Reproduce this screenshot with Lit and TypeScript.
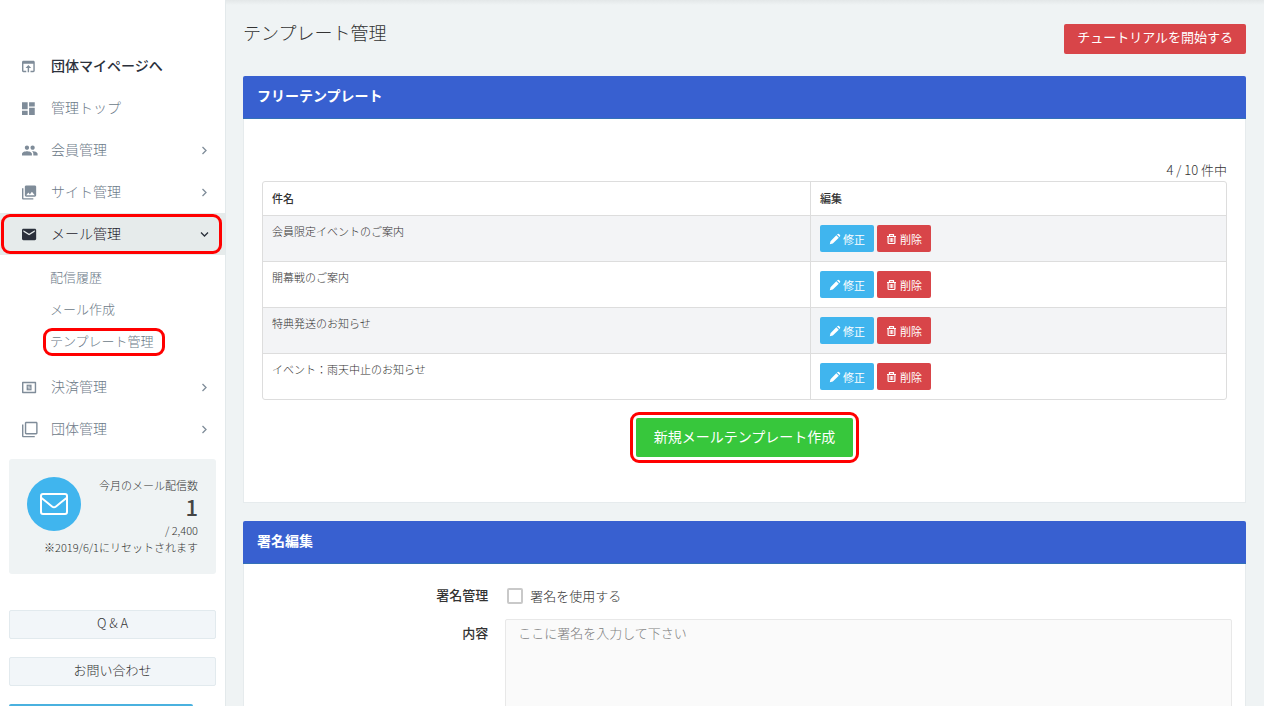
import { LitElement, html, css, svg, nothing } from "lit";
import { customElement } from "lit/decorators.js";
import { classMap } from "lit/directives/class-map.js";

interface Icon {
  box: string;
  shape: unknown;
}

const icons: Record<string, Icon> = {
  open: {
    box: "3 0 24 24",
    shape: svg`<path d="M19 4H5c-1.11 0-2 .9-2 2v12c0 1.1.89 2 2 2h4v-2H5V8h14v10h-4v2h4c1.1 0 2-.9 2-2V6c0-1.1-.89-2-2-2zm-7 6l-4 4h3v6h2v-6h3l-4-4z"/>`,
  },
  dashboard: {
    box: "3 0 24 24",
    shape: svg`<path d="M3 13h8V3H3v10zm0 8h8v-6H3v6zm10 0h8V11h-8v10zm0-18v6h8V3h-8z"/>`,
  },
  people: {
    box: "1 0 24 24",
    shape: svg`<path d="M16 11c1.66 0 2.99-1.34 2.99-3S17.66 5 16 5c-1.66 0-3 1.34-3 3s1.34 3 3 3zm-8 0c1.66 0 2.99-1.34 2.99-3S9.66 5 8 5C6.34 5 5 6.34 5 8s1.34 3 3 3zm0 2c-2.33 0-7 1.17-7 3.5V19h14v-2.5c0-2.33-4.67-3.5-7-3.5zm8 0c-.29 0-.62.02-.97.05 1.16.84 1.97 1.97 1.97 3.45V19h6v-2.5c0-2.33-4.67-3.5-7-3.5z"/>`,
  },
  photos: {
    box: "2 0 24 24",
    shape: svg`<path d="M22 16V4c0-1.100-.9-2-2-2H8c-1.100 0-2 .9-2 2v12c0 1.100.9 2 2 2h12c1.100 0 2-.9 2-2zm-11-4l2.030 2.710L16 11l4 5H8l3-4zM2 6v14c0 1.100.9 2 2 2h14v-2H4V6H2z"/>`,
  },
  mail: {
    box: "2 0 24 24",
    shape: svg`<path d="M20 4H4c-1.100 0-2 .9-2 2v12c0 1.100.9 2 2 2h16c1.100 0 2-.9 2-2V6c0-1.100-.9-2-2-2zm0 4l-8 5-8-5V6l8 5 8-5v2z"/>`,
  },
  money: {
    box: "2 0 24 24",
    shape: svg`<path fill-rule="evenodd" d="M3 4h18a1 1 0 0 1 1 1v14a1 1 0 0 1-1 1H3a1 1 0 0 1-1-1V5a1 1 0 0 1 1-1zm1 2v12h16V6H4z"/><path d="M8.500 8h7v8h-7z"/><path d="M13.500 10.200h-3v1.800h3v1.800h-3" fill="none" stroke="#fff" stroke-width=".7"/>`,
  },
  stack: {
    box: "1 0 24 24",
    shape: svg`<path d="M3 5H1v16c0 1.100.9 2 2 2h16v-2H3V5zm18-4H7c-1.100 0-2 .9-2 2v14c0 1.100.9 2 2 2h14c1.100 0 2-.9 2-2V3c0-1.100-.9-2-2-2zm0 16H7V3h14v14z"/>`,
  },
};

interface NavItem {
  label: string;
  icon: string;
  strong?: boolean;
  expandable?: boolean;
  children?: { label: string; marked?: boolean }[];
}

const nav: NavItem[] = [
  { label: "団体マイページへ", icon: "open", strong: true },
  { label: "管理トップ", icon: "dashboard" },
  { label: "会員管理", icon: "people", expandable: true },
  { label: "サイト管理", icon: "photos", expandable: true },
  {
    label: "メール管理",
    icon: "mail",
    expandable: true,
    children: [
      { label: "配信履歴" },
      { label: "メール作成" },
      { label: "テンプレート管理", marked: true },
    ],
  },
  { label: "決済管理", icon: "money", expandable: true },
  { label: "団体管理", icon: "stack", expandable: true },
];

const base = css`
  *,
  *::before,
  *::after {
    box-sizing: border-box;
  }
  a {
    color: inherit;
    text-decoration: none;
  }
  button,
  input,
  textarea {
    font: inherit;
  }
  button {
    cursor: pointer;
  }
  .marked {
    position: relative;
  }
  .marked::after {
    content: "";
    position: absolute;
    border: 3px solid #f00;
    border-radius: 9px;
    pointer-events: none;
  }
`;

@customElement("side-nav")
export class SideNav extends LitElement {
  static styles = [
    base,
    css`
      :host {
        display: block;
        padding-top: 45px;
        background: #fff;
        border-right: 1px solid #e3e9eb;
        color: #6c7a88;
      }
      .list {
        margin: 0;
        padding: 0;
        list-style: none;
      }
      .item {
        display: flex;
        align-items: center;
        height: 42px;
        padding: 0 16px 0 22px;
        font-size: 14px;
      }
      .item.strong {
        color: #2b303b;
        font-weight: 500;
      }
      .item.open {
        background: #e6ebeb;
        color: #1f242e;
      }
      .item.marked::after {
        inset: 1px 3px 1px 1px;
      }
      .icon {
        width: 17px;
        height: 17px;
        margin-right: 12px;
        fill: #7f8c99;
      }
      .open .icon {
        fill: #2b303b;
      }
      .label {
        flex: 1;
        line-height: 20px;
        padding-bottom: 2px;
      }
      .arrow {
        width: 9px;
        height: 9px;
        fill: none;
        stroke: #7f8c99;
        stroke-width: 1.3;
      }
      .open .arrow {
        stroke: #2b303b;
        transform: rotate(90deg);
      }
      .sub {
        margin: 0;
        padding: 7px 0 8px 50px;
        list-style: none;
        font-size: 13px;
        line-height: 20px;
      }
      .sub a {
        display: block;
        width: fit-content;
        padding: 5px 0 7px;
      }
      .sub .marked::after {
        inset: 2px -11px 2px -7px;
      }
      .usage {
        display: grid;
        grid-template-columns: 54px 1fr;
        margin: 9px 9px 36px;
        padding: 18px;
        border-radius: 3px;
        background: #eff3f4;
        color: #333;
        font-size: 11px;
        line-height: 17px;
        text-align: right;
      }
      .badge {
        display: grid;
        place-items: center;
        width: 54px;
        height: 54px;
        border-radius: 50%;
        background: #40b5ee;
      }
      .badge svg {
        width: 28px;
        height: 22px;
        fill: none;
        stroke: #fff;
        stroke-width: 2;
        stroke-linejoin: round;
      }
      .count {
        display: block;
        padding-bottom: 4px;
        color: #444;
        font-size: 22px;
        font-weight: 500;
        line-height: 24px;
      }
      .note {
        grid-column: 1 / -1;
        margin: 0;
        white-space: nowrap;
      }
      .actions {
        display: grid;
        gap: 18px;
        padding: 0 9px;
      }
      .plain {
        height: 29px;
        padding: 0 0 4px;
        border: 1px solid #e2eaee;
        border-radius: 2px;
        background: #f2f6f9;
        color: #333;
        font-size: 13px;
      }
      .meter {
        height: 9px;
        margin-right: 23px;
        border-radius: 2px;
        background: #4ab1df;
      }
    `,
  ];

  private item(item: NavItem) {
    const open = !!item.children;
    const icon = icons[item.icon];
    return html`<li>
      <a
        href="#"
        class=${classMap({ item: true, strong: !!item.strong, open, marked: open })}
      >
        <svg class="icon" viewBox=${icon.box} aria-hidden="true">${icon.shape}</svg>
        <span class="label">${item.label}</span>
        ${item.expandable
          ? html`<svg class="arrow" viewBox="0 0 9 9" aria-hidden="true">
              <path d="M2.500 1L6 4.500L2.500 8" />
            </svg>`
          : nothing}
      </a>
      ${item.children
        ? html`<ul class="sub">
            ${item.children.map(
              (c) => html`<li>
                <a href="#" class=${classMap({ marked: !!c.marked })}>${c.label}</a>
              </li>`
            )}
          </ul>`
        : nothing}
    </li>`;
  }

  render() {
    return html`
      <nav>
        <ul class="list">
          ${nav.map((i) => this.item(i))}
        </ul>
      </nav>
      <section class="usage">
        <span class="badge">
          <svg viewBox="0 0 28 22" aria-hidden="true">
            <rect x="1" y="1" width="26" height="20" rx="2" />
            <path d="M1.500 5C6 8.500 9 11 12 13.500c1.500 1.200 2.500 1.200 4 0C19 11 22 8.500 26.500 5" />
          </svg>
        </span>
        <div>
          今月のメール配信数
          <strong class="count">1</strong>
          / 2,400
        </div>
        <p class="note">※2019/6/1にリセットされます</p>
      </section>
      <div class="actions">
        <button class="plain" type="button">Q &amp; A</button>
        <button class="plain" type="button">お問い合わせ</button>
        <div class="meter"></div>
      </div>
    `;
  }
}

@customElement("panel-card")
export class PanelCard extends LitElement {
  static properties = { heading: { type: String } };
  declare heading: string;

  static styles = [
    base,
    css`
      :host {
        display: block;
      }
      .head {
        margin: 0;
        padding: 9px 14px 13px;
        border-bottom: 1px solid #3471b8;
        border-radius: 2px 2px 0 0;
        background: #3860d0;
        color: #fff;
        font-size: 14px;
        font-weight: 700;
        line-height: 20px;
      }
      .body {
        border: 1px solid #e6ebed;
        border-top: 0;
        background: #fff;
      }
    `,
  ];

  render() {
    return html`
      <h2 class="head">${this.heading}</h2>
      <div class="body"><slot></slot></div>
    `;
  }
}

const templates = [
  "会員限定イベントのご案内",
  "開幕戦のご案内",
  "特典発送のお知らせ",
  "イベント：雨天中止のお知らせ",
];

@customElement("app-root")
export class AppRoot extends LitElement {
  static styles = [
    base,
    css`
      :host {
        display: grid;
        grid-template-columns: 226px minmax(0, 1fr);
        height: 100vh;
        overflow: hidden;
        background: #eff3f4;
        color: #333;
        font-family: "Noto Sans CJK JP", sans-serif;
        font-size: 13px;
        font-weight: 300;
        line-height: 20px;
      }
      side-nav,
      main {
        min-height: 0;
        overflow-y: auto;
        scrollbar-width: none;
      }
      main {
        padding: 0 18px 18px 17px;
        background: linear-gradient(#e3e7e8, #eff3f4 5px);
      }
      .top {
        display: flex;
        align-items: flex-start;
        justify-content: space-between;
        padding: 18px 0 22px;
      }
      .title {
        margin: 0;
        font-size: 18px;
        font-weight: 300;
        line-height: 28px;
      }
      .btn {
        border: 0;
        border-radius: 2px;
        color: #fff;
        font-weight: 400;
      }
      .tutorial {
        height: 30px;
        margin-top: 6px;
        padding: 0 13px 4px;
        background: #d84549;
      }
      panel-card + panel-card {
        margin-top: 18px;
      }
      .free {
        padding: 41px 18px 45px;
      }
      .total {
        margin: 0;
        padding-bottom: 1px;
        text-align: right;
      }
      .table {
        width: 100%;
        border: 1px solid #ddd;
        border-radius: 3px;
        border-spacing: 0;
        table-layout: fixed;
        font-size: 11px;
      }
      .table th,
      .table td {
        padding: 5px 9px;
        border-top: 1px solid #ddd;
        text-align: left;
        vertical-align: top;
      }
      .table th {
        height: 33px;
        padding: 6px 9px 7px;
        border-top: 0;
        font-weight: 500;
      }
      .table td {
        height: 46px;
      }
      .table th + th,
      .table td + td {
        border-left: 1px solid #ddd;
      }
      .table tbody tr:nth-child(odd) {
        background: #f3f4f6;
      }
      .table .subject {
        width: 56.8%;
      }
      .table .ops {
        padding-top: 9px;
      }
      .pair {
        display: flex;
        gap: 3px;
      }
      .small {
        display: flex;
        align-items: center;
        gap: 2px;
        height: 27px;
        padding: 0 9px;
        font-size: 11px;
      }
      .small svg {
        width: 12px;
        height: 12px;
      }
      .edit {
        background: #40b5ee;
      }
      .delete {
        background: #d84549;
      }
      .create {
        display: flex;
        justify-content: center;
        padding-top: 18px;
      }
      .create .marked::after {
        inset: -6px;
      }
      .new {
        height: 39px;
        padding: 0 18px 4px;
        background: #37c73c;
        font-size: 14px;
      }
      .form {
        display: grid;
        grid-template-columns: 1fr 3fr;
        column-gap: 17px;
        padding: 21px 13px 21px 2px;
      }
      .name {
        font-weight: 500;
        text-align: right;
      }
      .use {
        display: flex;
        align-items: center;
        gap: 7px;
        height: 22px;
        margin-bottom: 12px;
        padding-left: 2px;
      }
      .check {
        appearance: none;
        width: 16px;
        height: 16px;
        margin: 0;
        border: 2px solid #c9c9c9;
        border-radius: 2px;
        background: #fff;
      }
      .content {
        padding-top: 4px;
      }
      .area {
        display: block;
        width: 100%;
        height: 180px;
        padding: 3px 12px;
        border: 1px solid #e8e8e8;
        border-radius: 2px;
        background: #fafafa;
        resize: none;
      }
      .area::placeholder {
        color: #808080;
      }
    `,
  ];

  render() {
    return html`
      <side-nav></side-nav>
      <main>
        <header class="top">
          <h1 class="title">テンプレート管理</h1>
          <button class="btn tutorial" type="button">チュートリアルを開始する</button>
        </header>
        <panel-card heading="フリーテンプレート">
          <div class="free">
            <p class="total">4 / 10 件中</p>
            <table class="table">
              <thead>
                <tr>
                  <th class="subject" scope="col">件名</th>
                  <th scope="col">編集</th>
                </tr>
              </thead>
              <tbody>
                ${templates.map(
                  (t) => html`<tr>
                    <td>${t}</td>
                    <td class="ops">
                      <div class="pair">
                        <button class="btn small edit" type="button">
                          <svg viewBox="0 0 12 12" fill="#fff" aria-hidden="true">
                            <path d="M0.800 11.200L1.500 8.200L7.300 2.200L9.800 4.700L3.800 10.500ZM8 1.500L8.700 0.900Q9.300 0.500 9.900 1L11 2.100Q11.500 2.700 11.100 3.300L10.500 4Z" />
                          </svg>
                          修正
                        </button>
                        <button class="btn small delete" type="button">
                          <svg
                            viewBox="0 0 12 12"
                            fill="none"
                            stroke="#fff"
                            aria-hidden="true"
                          >
                            <path stroke-width="1.200" d="M1 3.500H10M3.500 3.500V1.600H7.500V3.500M2.100 3.500V9.800Q2.100 10.500 2.800 10.500H8.200Q8.900 10.500 8.900 9.800V3.500" />
                            <path stroke-width=".900" d="M4.200 5V9M5.500 5V9M6.800 5V9" />
                          </svg>
                          削除
                        </button>
                      </div>
                    </td>
                  </tr>`
                )}
              </tbody>
            </table>
            <div class="create">
              <span class="marked">
                <button class="btn new" type="button">新規メールテンプレート作成</button>
              </span>
            </div>
          </div>
        </panel-card>
        <panel-card heading="署名編集">
          <form class="form">
            <span class="name">署名管理</span>
            <label class="use">
              <input class="check" type="checkbox" />署名を使用する
            </label>
            <label class="name content" for="signature">内容</label>
            <textarea
              class="area"
              id="signature"
              placeholder="ここに署名を入力して下さい"
            ></textarea>
          </form>
        </panel-card>
      </main>
    `;
  }
}
